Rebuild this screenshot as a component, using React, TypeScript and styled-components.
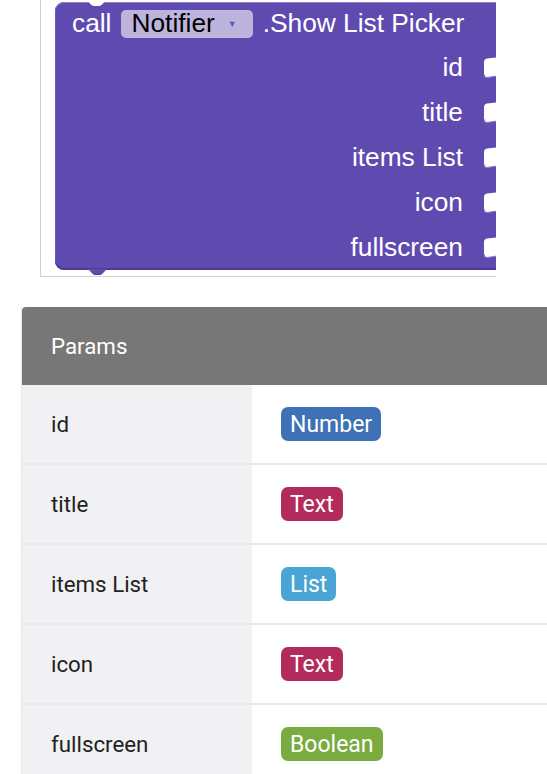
import React from "react";
import styled, { createGlobalStyle } from "styled-components";

const Global = createGlobalStyle`
  html, body { margin: 0; padding: 0; background: #ffffff; }
  body { width: 547px; height: 774px; overflow: hidden; }
`;

const Page = styled.div`
  width: 547px;
  height: 774px;
  overflow: hidden;
  display: flex;
  flex-direction: column;
`;

const Frame = styled.div`
  flex-shrink: 0;
  margin-left: 40px;
  width: 455px;
  height: 276px;
  border-left: 1px solid #cfcfcf;
  border-bottom: 1px solid #cfcfcf;
  overflow: hidden;
  position: relative;
`;

const Block = styled.div`
  position: relative;
  margin-left: 14px;
  margin-top: 2px;
  width: 470px;
  height: 268px;
  background: #5f4bb0;
  border-radius: 9px 0 0 9px;
  box-shadow: inset 0 1px 0 #8c7dc9, inset 0 -2px 0 #4a3a91, inset 1px 0 0 #6d5bbb;
  font-family: "Liberation Sans", Arial, sans-serif;
  font-size: 26.3px;
  color: #ffffff;
  display: flex;
  flex-direction: column;
  box-sizing: border-box;
  padding-right: 62px;
  white-space: nowrap;
`;

const Header = styled.div`
  height: 43px;
  flex-shrink: 0;
  display: flex;
  align-items: center;
  gap: 10px;
  padding-left: 17px;
  margin-right: -62px;
`;

const Dropdown = styled.div`
  height: 28px;
  display: flex;
  align-items: center;
  padding: 0 16px 0 10px;
  gap: 13px;
  background: #bdb4de;
  border-radius: 5px;
  color: #000000;
`;

const Caret = styled.span`
  font-size: 9px;
  color: #6656b4;
  margin-top: 1px;
`;

const InputRow = styled.div`
  height: 45px;
  flex-shrink: 0;
  display: flex;
  align-items: center;
  justify-content: flex-end;
  position: relative;
`;

const Socket = styled.svg`
  position: absolute;
  right: -34px;
  top: 12px;
`;

const TopNotch = styled.svg`
  position: absolute;
  left: 31px;
  top: -1px;
`;

const BottomTab = styled.svg`
  position: absolute;
  left: 32px;
  bottom: -6px;
`;

const Table = styled.div`
  flex-shrink: 0;
  margin-top: 30px;
  margin-left: 22px;
  width: 540px;
  font-family: Roboto, "Liberation Sans", sans-serif;
  font-size: 22.3px;
  box-shadow: -1px 0 1px rgba(0, 0, 0, 0.08);
`;

const HeadRow = styled.div`
  height: 78px;
  background: #777777;
  border-radius: 4px 0 0 0;
  display: flex;
  align-items: center;
  padding-left: 29px;
  color: #ffffff;
`;

const Row = styled.div`
  display: grid;
  grid-template-columns: 230px 1fr;
  height: 78px;
  border-bottom: 2px solid #e9e9ec;
`;

const NameCell = styled.div`
  background: #f1f1f3;
  display: flex;
  align-items: center;
  padding-left: 29px;
  color: #222222;
`;

const TypeCell = styled.div`
  background: #ffffff;
  display: flex;
  align-items: center;
  padding-left: 29px;
`;

const Badge = styled.span<{ $bg: string }>`
  display: inline-flex;
  align-items: center;
  height: 34px;
  padding: 0 9px;
  border-radius: 7px;
  background: ${(p) => p.$bg};
  color: #ffffff;
  font-size: 23px;
`;

const TYPES: Record<string, string> = {
  Number: "#3e71b6",
  Text: "#b32b5c",
  List: "#4aa4d6",
  Boolean: "#79ab3f",
};

const params = [
  { name: "id", type: "Number" },
  { name: "title", type: "Text" },
  { name: "items List", type: "List" },
  { name: "icon", type: "Text" },
  { name: "fullscreen", type: "Boolean" },
];

const SocketShape = () => (
  <Socket width="14" height="22" viewBox="0 0 14 22">
    <path d="M14,0.5 L4,1.5 Q1,2 1,5 L1,17 Q1,20.5 4,20.5 L14,19 Z" fill="#ffffff" />
    <path d="M1,17 Q1,20.5 4,20.5 L14,19" fill="none" stroke="#8a7bc8" strokeWidth="1" />
  </Socket>
);

export default function App() {
  return (
    <Page>
      <Global />
      <Frame>
        <Block>
          <TopNotch width="22" height="7" viewBox="0 0 22 7">
            <path d="M0,0 C3,0 5,5 8,5 L13,5 C16,5 18,0 21,0 Z" fill="#ffffff" />
          </TopNotch>
          <Header>
            <span>call</span>
            <Dropdown>
              <span>Notifier</span>
              <Caret>▼</Caret>
            </Dropdown>
            <span>.Show List Picker</span>
          </Header>
          {params.map((p) => (
            <InputRow key={p.name}>
              <span>{p.name}</span>
              <SocketShape />
            </InputRow>
          ))}
          <BottomTab width="22" height="7" viewBox="0 0 22 7">
            <path d="M0,0 C3,0 5,6 8,6 L13,6 C16,6 18,0 21,0 Z" fill="#4f3e98" />
            <path d="M0,0 C3,0 5,5 8,5 L13,5 C16,5 18,0 21,0 Z" fill="#5f4bb0" />
          </BottomTab>
        </Block>
      </Frame>
      <Table>
        <HeadRow>Params</HeadRow>
        {params.map((p) => (
          <Row key={p.name}>
            <NameCell>{p.name}</NameCell>
            <TypeCell>
              <Badge $bg={TYPES[p.type]}>{p.type}</Badge>
            </TypeCell>
          </Row>
        ))}
      </Table>
    </Page>
  );
}
